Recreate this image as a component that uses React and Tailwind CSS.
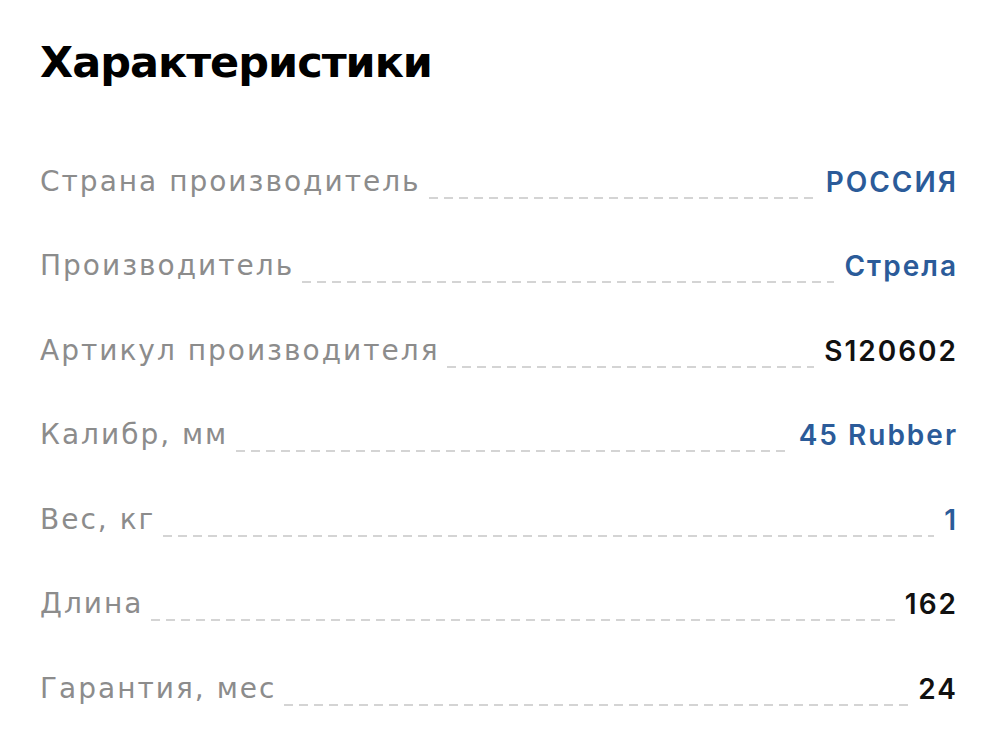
const rows = [
  { label: 'Страна производитель', value: 'РОССИЯ', link: true },
  { label: 'Производитель', value: 'Стрела', link: true },
  { label: 'Артикул производителя', value: 'S120602' },
  { label: 'Калибр, мм', value: '45 Rubber', link: true },
  { label: 'Вес, кг', value: '1', link: true },
  { label: 'Длина', value: '162' },
  { label: 'Гарантия, мес', value: '24' },
];

function SpecRow({ label, value, link }) {
  return (
    <div className="flex items-end h-[84.5px]">
      <span className="text-[#8c8c8c] text-[28px] leading-[40px] tracking-[2px] shrink-0">{label}</span>
      <span className="flex-1 ml-[8px] mr-[10px] h-[2px] mb-[3px] bg-[linear-gradient(to_right,#d4d4d4_60%,transparent_0%)] bg-[length:15px_2px] bg-repeat-x"></span>
      <span className={(link ? 'text-[#2b5b99]' : 'text-[#111111]') + " font-['Inter',sans-serif] text-[28px] leading-[40px] font-semibold tracking-[2px] shrink-0"}>
        {value}
      </span>
    </div>
  );
}

export default function App() {
  return (
    <div className="w-full min-h-screen bg-white pl-[40px] pr-[42px] pt-[34px] font-['DejaVu_Sans',sans-serif]">
      <h1 className="text-[43px] leading-[56px] font-bold text-black tracking-[-1px]">Характеристики</h1>
      <div className="mt-[27px]">
        {rows.map((r) => (
          <SpecRow key={r.label} {...r} />
        ))}
      </div>
    </div>
  );
}
